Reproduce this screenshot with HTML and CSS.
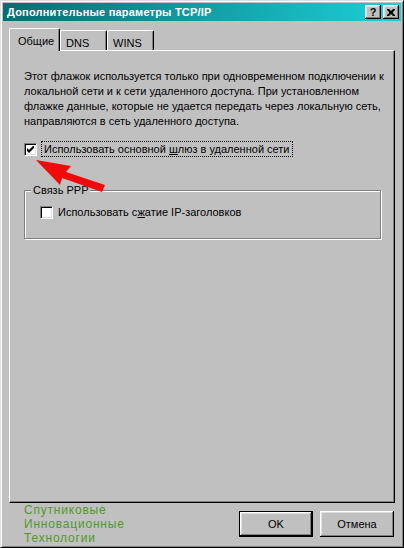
FILE: index.html
```html
<!DOCTYPE html>
<html lang="ru">
<head>
    <meta charset="UTF-8">
    <meta name="viewport" content="width=device-width, initial-scale=1.0">
    <title>Дополнительные параметры TCP/IP</title>
    <link rel="stylesheet" href="styles.css">
</head>
<body>

    <div class="window">
        <div class="titlebar">
            <span class="title">Дополнительные параметры TCP/IP</span>
            <div class="title-buttons">
                <span class="tbtn help">?</span>
                <span class="tbtn close">
                    <svg width="8" height="7" viewBox="0 0 8 7">
                        <path d="M0 0h2l2 2 2-2h2v1l-2 2v1l2 2v1h-2l-2-2-2 2h-2v-1l2-2v-1l-2-2z" fill="#000"/>
                    </svg>
                </span>
            </div>
        </div>

        <div class="dialog">
            <div class="tabs">
                <div class="tab active">Общие</div>
                <div class="tab">DNS</div>
                <div class="tab">WINS</div>
            </div>

            <div class="panel">
                <p class="note">
                    Этот флажок используется только при одновременном подключении к<br>
                    локальной сети и к сети удаленного доступа. При установленном<br>
                    флажке данные, которые не удается передать через локальную сеть,<br>
                    направляются в сеть удаленного доступа.
                </p>

                <div class="check-row main">
                    <span class="checkbox">
                        <svg width="7" height="7" viewBox="0 0 7 7">
                            <path d="M0 2v3l2 2 5-5v-3l-5 5z" fill="#000"/>
                        </svg>
                    </span>
                    <span class="focus">Использовать основной <u>ш</u>люз в удаленной сети</span>
                </div>

                <div class="group">
                    <span class="group-label">Связь PPP</span>
                    <div class="check-row">
                        <span class="checkbox"></span>
                        <span class="label">Использовать с<u>ж</u>атие IP-заголовков</span>
                    </div>
                </div>
            </div>

            <div class="footer">
                <div class="brand">Спутниковые<br>Инновационные<br>Технологии</div>
                <div class="buttons">
                    <button class="btn default">OK</button>
                    <button class="btn">Отмена</button>
                </div>
            </div>
        </div>

        <!-- red pointer drawn over the dialog -->
        <svg class="arrow" width="404" height="548" viewBox="0 0 404 548">
            <polygon points="35,159 70,165 65,171 104,184 101,191 61,177 59,184" fill="#f00a0a"/>
        </svg>
    </div>

</body>
</html>
```

FILE: styles.css
```css
* {
    box-sizing: border-box;
    margin: 0;
    padding: 0;
}

body {
    width: 404px;
    height: 548px;
    background: #c0c0c0;
    font-family: "Liberation Sans", Arial, sans-serif;
    font-size: 11px;
    color: #000;
    overflow: hidden;
}

.window {
    position: relative;
    height: 548px;
    padding: 2px;
    border: 1px solid;
    border-color: #dfdfdf #000 #000 #dfdfdf;
    box-shadow: inset 1px 1px #fff, inset -1px -1px #808080;
}

.titlebar {
    height: 18px;
    display: flex;
    align-items: center;
    justify-content: space-between;
    padding: 0 2px 0 4px;
    background: linear-gradient(to right, #086c70, #1ccfd8);
}

.title {
    color: #fff;
    font-weight: bold;
    font-size: 11px;
    letter-spacing: 0.2px;
}

.title-buttons {
    display: flex;
    gap: 2px;
}

.tbtn {
    width: 16px;
    height: 14px;
    display: flex;
    align-items: center;
    justify-content: center;
    background: #c0c0c0;
    box-shadow: inset -1px -1px #000, inset 1px 1px #fff, inset -2px -2px #808080, inset 2px 2px #dfdfdf;
    font-weight: bold;
    font-size: 11px;
    line-height: 14px;
}

.dialog {
    padding: 7px 6px 0;
}

.tabs {
    display: flex;
    align-items: flex-end;
    height: 22px;
}

.tab {
    width: 47px;
    height: 20px;
    padding: 6px 0 0 5px;
    line-height: 13px;
    border-left: 1px solid #fff;
    border-top: 1px solid #fff;
    border-right: 1px solid #000;
    border-top-left-radius: 2px;
    border-top-right-radius: 2px;
    box-shadow: inset -1px 0 #808080;
}

.tab.active {
    position: relative;
    z-index: 1;
    width: 51px;
    height: 23px;
    margin-bottom: -1px;
    padding-left: 8px;
    background: #c0c0c0;
}

.panel {
    height: 453px;
    padding: 18px 12px 0 14px;
    border: 1px solid;
    border-color: #fff #000 #000 #fff;
    box-shadow: inset -1px -1px #808080;
}

.note {
    line-height: 15px;
    white-space: nowrap;
}

.check-row {
    display: flex;
    align-items: center;
    height: 13px;
}

.check-row.main {
    height: 16px;
    margin-top: 12px;
}

.checkbox {
    width: 13px;
    height: 13px;
    flex-shrink: 0;
    display: flex;
    align-items: center;
    justify-content: center;
    background: #fff;
    border: 1px solid;
    border-color: #808080 #fff #fff #808080;
    box-shadow: inset 1px 1px #000, inset -1px -1px #dfdfdf;
}

.focus {
    margin-left: 4px;
    padding: 0 2px;
    line-height: 14px;
    border: 1px dotted #000;
}

.label {
    margin-left: 5px;
    line-height: 13px;
}

.group {
    position: relative;
    width: 357px;
    height: 49px;
    margin-top: 33px;
    padding: 15px 0 0 15px;
    border: 1px solid #808080;
    box-shadow: inset 1px 1px #fff, 1px 1px #fff;
}

.group-label {
    position: absolute;
    top: -7px;
    left: 6px;
    padding: 0 2px;
    line-height: 13px;
    background: #c0c0c0;
}

.footer {
    display: flex;
    justify-content: space-between;
    align-items: flex-start;
    padding-left: 15px;
}

.brand {
    padding-top: 1px;
    color: #4f9a28;
    font-size: 12px;
    letter-spacing: 0.8px;
    line-height: 13.9px;
}

.buttons {
    display: flex;
    gap: 7px;
    margin-top: 8px;
    margin-right: 1px;
}

.btn {
    width: 74px;
    height: 26px;
    font-family: "Liberation Sans", Arial, sans-serif;
    font-size: 11px;
    color: #000;
    background: #c0c0c0;
    border: none;
    box-shadow: inset -1px -1px #000, inset 1px 1px #fff, inset -2px -2px #808080, inset 2px 2px #dfdfdf;
}

.btn.default {
    border: 1px solid #000;
}

.arrow {
    position: absolute;
    top: 0;
    left: 0;
    pointer-events: none;
}
```
